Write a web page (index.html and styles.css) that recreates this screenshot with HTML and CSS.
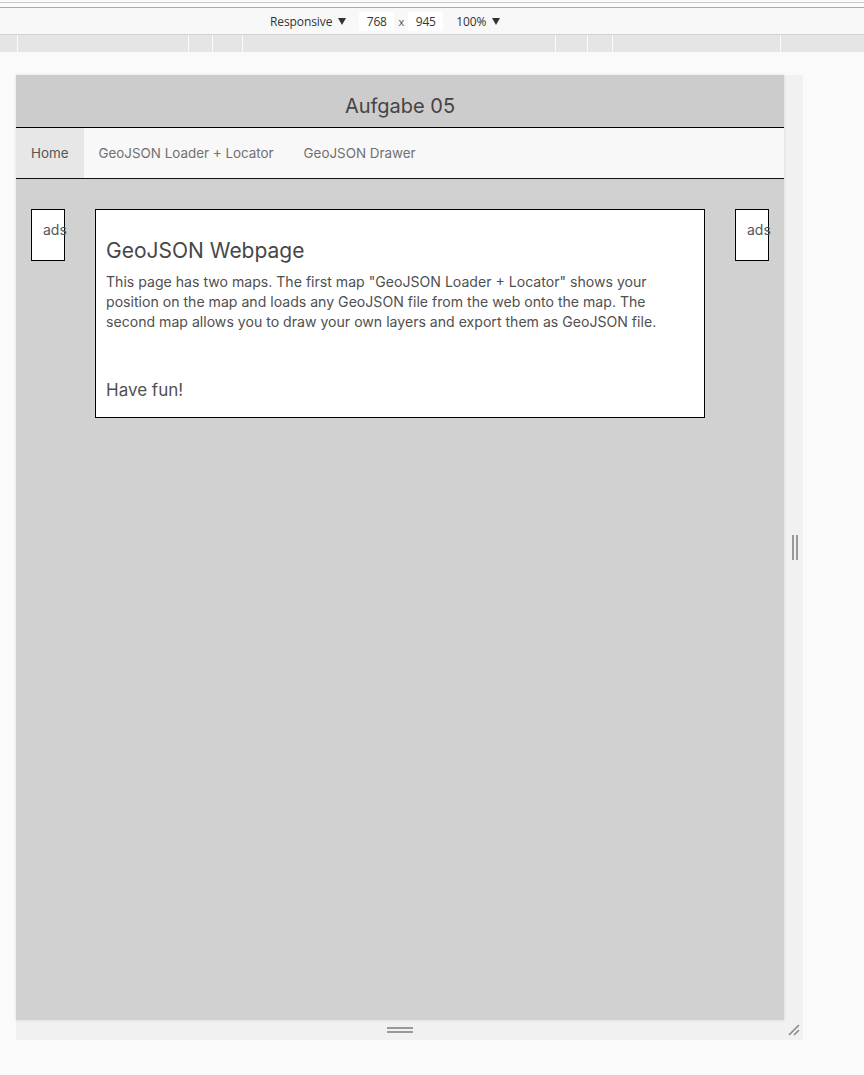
FILE: index.html
```html
<!DOCTYPE html>
<html lang="de">
<head>
<meta charset="utf-8">
<title>Aufgabe 05</title>
<link rel="stylesheet" href="styles.css">
</head>
<body>
<div class="tabs"></div>
<div class="toolbar">
  <span class="mode">Responsive<i class="arr"></i></span>
  <span class="dim">768</span>
  <span class="times">x</span>
  <span class="dim">945</span>
  <span class="zoomsel">100%<i class="arr"></i></span>
</div>
<div class="ruler">
  <span class="seg first" style="width:17px"></span>
  <span class="seg" style="width:171px"></span>
  <span class="seg" style="width:24px"></span>
  <span class="seg" style="width:30px"></span>
  <span class="seg" style="width:313px"></span>
  <span class="seg" style="width:32px"></span>
  <span class="seg" style="width:25px"></span>
  <span class="seg" style="width:168px"></span>
  <span class="seg rest"></span>
</div>
<div class="stage">
  <div class="device">
    <div class="viewport">
      <header class="hdr">Aufgabe 05</header>
      <nav class="nav">
        <a class="nav-link active">Home</a>
        <a class="nav-link">GeoJSON Loader + Locator</a>
        <a class="nav-link">GeoJSON Drawer</a>
      </nav>
      <main class="main">
        <aside class="ad">ads</aside>
        <section class="content">
          <h2 class="title">GeoJSON Webpage</h2>
          <p class="text">This page has two maps. The first map "GeoJSON Loader + Locator" shows your position on the map and loads any GeoJSON file from the web onto the map. The second map allows you to draw your own layers and export them as GeoJSON file.</p>
          <p class="fun">Have fun!</p>
        </section>
        <aside class="ad">ads</aside>
      </main>
    </div>
    <div class="side-handle"><i class="vbar"></i><i class="vbar"></i></div>
    <div class="bottom-handle"><i class="hbar"></i><i class="hbar"></i></div>
    <div class="corner">
      <svg width="14" height="14" viewBox="0 0 14 14"><path d="M2 12 L12 2 M7 12 L12 7" stroke="#8a8a8a" stroke-width="1.6" fill="none"/></svg>
    </div>
  </div>
</div>
</body>
</html>
```
FILE: styles.css
```css
html, body {
  margin: 0;
  padding: 0;
  background: #fafafa;
}
body {
  width: 864px;
  height: 1075px;
  overflow: hidden;
}
.tabs {
  margin-top: 2px;
  height: 4px;
  border-top: 1px solid #c8c8c8;
  border-bottom: 1px solid #a9a9a9;
  background: #fafafa;
}
.toolbar {
  height: 26px;
  border-bottom: 1px solid #d2d2d2;
  background: #f8f8f8;
  display: flex;
  align-items: center;
  padding-left: 270px;
  font-family: "Open Sans", "Noto Sans", sans-serif;
  font-size: 12px;
  color: #333;
}
.mode, .zoomsel {
  display: flex;
  align-items: center;
  letter-spacing: -0.1px;
}
.mode { margin-right: 13px; }
.zoomsel { margin-left: 13px; }
.arr {
  display: block;
  width: 0;
  height: 0;
  margin-left: 6px;
  border-left: 4px solid transparent;
  border-right: 4px solid transparent;
  border-top: 7px solid #333;
}
.dim {
  background: #fff;
  width: 35px;
  height: 19px;
  line-height: 19px;
  text-align: center;
  letter-spacing: -0.2px;
}
.times { width: 14px; text-align: center; color: #555; font-size: 11px; }
.ruler {
  height: 17px;
  background: #e5e5e5;
  display: flex;
}
.seg {
  height: 17px;
  box-sizing: border-box;
  border-left: 1px solid #fbfbfb;
  flex: none;
}
.seg.first { border-left: 0; }
.seg.rest { flex: 1; }
.stage {
  padding: 23px 0 0 16px;
}
.device {
  display: grid;
  grid-template-columns: 768px 19px;
  grid-template-rows: 945px 20px;
  width: 787px;
  background: #f1f1f1;
}
.viewport {
  grid-column: 1;
  grid-row: 1;
  display: flex;
  flex-direction: column;
  background: #d1d1d1;
  box-shadow: 0 0 3px rgba(0,0,0,0.12);
  font-family: Inter, "DejaVu Sans", sans-serif;
  overflow: hidden;
}
.hdr {
  background: #cccccc;
  padding: 19px 0 9px;
  line-height: 24px;
  font-size: 20px;
  text-align: center;
  color: #444;
  border-bottom: 1px solid #000;
}
.nav {
  display: flex;
  height: 50px;
  background: #f8f8f8;
  border-bottom: 1px solid #111;
}
.nav-link {
  display: flex;
  align-items: center;
  padding: 0 15px;
  font-size: 13.4px;
  color: #707070;
}
.nav-link.active {
  background: #e7e7e7;
  color: #555;
}
.main {
  flex: 1;
  display: flex;
  align-items: flex-start;
  gap: 30px;
  padding: 30px 15px;
  background: #d1d1d1;
}
.ad {
  box-sizing: border-box;
  width: 34px;
  height: 52px;
  flex: none;
  background: #fff;
  border: 1px solid #000;
  padding: 10px 0 0 11px;
  font-size: 14px;
  line-height: 20px;
  color: #555;
  white-space: nowrap;
}
.content {
  flex: 1;
  background: #fff;
  border: 1px solid #000;
  padding: 0 18px 16px 10px;
  color: #505050;
}
.title {
  margin: 28px 0 0;
  font-size: 21px;
  line-height: 26px;
  font-weight: 400;
  color: #474747;
}
.text {
  margin: 8px 0 0;
  font-size: 14.1px;
  line-height: 20px;
}
.fun {
  margin: 47px 0 0;
  font-size: 17px;
  line-height: 22px;
}
.side-handle {
  grid-column: 2;
  grid-row: 1;
  display: flex;
  justify-content: center;
  align-items: center;
  gap: 2px;
  padding-left: 3px;
}
.vbar {
  width: 2px;
  height: 25px;
  background: #999;
}
.bottom-handle {
  grid-column: 1;
  grid-row: 2;
  display: flex;
  flex-direction: column;
  align-items: center;
  justify-content: center;
  gap: 2px;
}
.hbar {
  width: 26px;
  height: 2px;
  background: #999;
}
.corner {
  grid-column: 2;
  grid-row: 2;
  display: flex;
  align-items: flex-end;
  padding: 0 0 3px 3px;
}
.corner svg { display: block; }
```
